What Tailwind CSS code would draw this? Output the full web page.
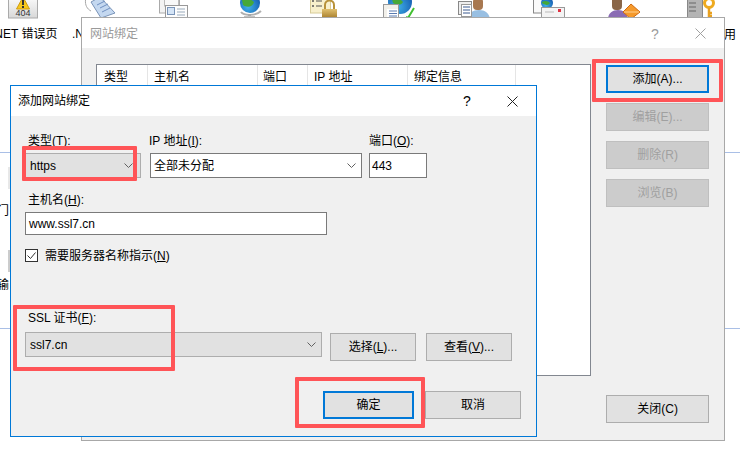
<!doctype html>
<html><head><meta charset="utf-8"><script src="https://cdn.jsdelivr.net/npm/@tailwindcss/browser@4"></script></head>
<body class="bg-white">
<div class="relative w-[740px] h-[454px] overflow-hidden bg-white text-[12px] leading-[16px] text-black font-['Liberation_Sans','Noto_Sans_CJK_SC',sans-serif]">

<!-- desktop background -->
<svg class="absolute left-0 top-0" width="740" height="20" viewBox="0 0 740 20">
  <defs>
    <radialGradient id="g" cx="0.4" cy="0.7" r="0.8"><stop offset="0" stop-color="#3fb0e8"/><stop offset="1" stop-color="#0f4fa8"/></radialGradient>
    <linearGradient id="l" x1="0" y1="0" x2="0" y2="1"><stop offset="0" stop-color="#e0c070"/><stop offset="1" stop-color="#a87f2c"/></linearGradient>
    <linearGradient id="t" x1="0" y1="0" x2="0" y2="1"><stop offset="0" stop-color="#fbfbfb"/><stop offset="1" stop-color="#d8d8d8"/></linearGradient>
  </defs>
  <rect x="8.500" y="-3" width="29" height="21" fill="url(#t)" stroke="#aaa"/>
  <path d="M23 -3 L29.500 9 L16.500 9 Z" fill="#f7c81c" stroke="#d09c10"/><rect x="22" y="0" width="2" height="5" fill="#333"/><rect x="22" y="6" width="2" height="2" fill="#333"/>
  <path d="M85.500 0C85 5 87 9 91 11" fill="none" stroke="#a8a8a8"/>
  <path d="M91 2 L100 -3 L115 13 L101 18 Z" fill="#c4d8f0" stroke="#7a94b8"/><path d="M97 5l8-4M100 8l8-4M102 12l8-4" stroke="#6f8fc0"/>
  <rect x="159.500" y="-2" width="20" height="15" fill="#f3f3f3" stroke="#aaa"/><rect x="164.500" y="-2" width="14" height="8" fill="#f8f8f8" stroke="#bbb"/><rect x="165.500" y="5.500" width="22" height="13" fill="#fdfdfd" stroke="#999"/><rect x="167.500" y="7.500" width="7" height="7" fill="#d4e4f6" stroke="#7a94b8"/><path d="M177 9h8M177 12h8M177 15h8" stroke="#9ab"/>
  <path d="M241 12c3 4 15 4 20 -1" fill="none" stroke="#b0b0b0" stroke-width="2"/>
  <circle cx="250" cy="3" r="10" fill="url(#g)"/><path d="M242 0c4-3 9-1 12 2-1 5-7 6-11 3z" fill="#46a838"/><rect x="248" y="14" width="3" height="2" fill="#aaa"/><rect x="244" y="16" width="11" height="1" fill="#c4c4c4"/>
  <rect x="310.500" y="-3" width="20" height="16" fill="#f8f0cc" stroke="#d8cc98"/><path d="M316 1h6M316 6h6" stroke="#555"/><circle cx="313" cy="1" r="1" fill="#555"/><circle cx="313" cy="6" r="1" fill="#555"/>
  <rect x="322" y="9" width="15" height="9" fill="url(#l)"/><path d="M325 9V5a4.500 4.500 0 0 1 9 0v4" fill="none" stroke="#b8923a" stroke-width="2"/>
  <circle cx="400" cy="2" r="12" fill="url(#g)"/><path d="M392 -1c4-2 9 0 11 3-2 4-7 3-10 1z" fill="#46a838"/><rect x="383.500" y="4.500" width="15" height="14" fill="#f2f0ea" stroke="#999"/><rect x="387" y="9" width="11" height="9" fill="#fff"/><path d="M389 11h8M389 13.500h8M389 16h8" stroke="#5a7ab0"/><path d="M406 17l2 1 6-10" fill="none" stroke="#40c030" stroke-width="2"/>
  <path d="M468 19c0-6 5-9 11-9s10 3 11 9z" fill="#98bfe2"/><rect x="473" y="-2" width="10" height="12" rx="4" fill="#a87850"/><rect x="458.500" y="1.500" width="13" height="13" fill="#eee" stroke="#888"/><rect x="461.500" y="4.500" width="10" height="12" fill="#fff" stroke="#999"/><path d="M463 7h7M463 10h7M463 13h7" stroke="#3a5a90"/>
  <rect x="533.500" y="-3" width="14" height="16" fill="#fafafa" stroke="#888"/><circle cx="547" cy="3" r="6" fill="url(#g)"/><path d="M542 2c3-2 6-1 8 1-2 3-5 2-8 0z" fill="#46a838"/><rect x="541.500" y="7.500" width="23" height="11" fill="#f4f4f4" stroke="#999"/><rect x="558" y="9" width="3" height="3" fill="#e03040"/><path d="M545 12h9" stroke="#bbb"/>
  <path d="M608 19c0-6 5-9 10-9s9 3 10 9z" fill="#8a6cb4"/><rect x="612" y="-3" width="10" height="13" rx="4" fill="#8a6648"/><path d="M631 4l9 8-9 7-8-7z" fill="#f59a2c" stroke="#d06a10"/><path d="M624 12h15" stroke="#ffd090"/>
  <rect x="687.500" y="-3" width="15" height="22" fill="#b4b4b4" stroke="#888"/><path d="M689 3h7M689 7h7M689 11h7" stroke="#666"/><circle cx="709" cy="3" r="4.500" fill="none" stroke="#eeaa20" stroke-width="3"/><path d="M709 8v10M709 13h3M709 16h3" stroke="#e8a020" stroke-width="2.500"/>
  <rect x="0" y="0" width="0" height="0"/>
</svg>
<span class="absolute left-[23px] top-[9px] -translate-x-1/2 text-[9px] leading-[9px] text-[#333]">404</span>
<div class="absolute left-[-9px] top-[26px] whitespace-nowrap">.NET 错误页</div>
<div class="absolute left-[72px] top-[26px] whitespace-nowrap">.NET</div>
<div class="absolute left-[724px] top-[27px]">用</div>
<div class="absolute left-[-3px] top-[203px]">门</div>
<div class="absolute left-[-3px] top-[277px]">输</div>
<div class="absolute left-0 top-[152px] w-full h-px bg-[#a9bfe6]"></div>
<div class="absolute left-0 top-[328px] w-full h-px bg-[#a9bfe6]"></div>
<div class="absolute left-[8px] top-[167px] w-[3px] h-[22px] bg-[#e8e8e8]"></div>
<div class="absolute left-[8px] top-[250px] w-[3px] h-[22px] bg-[#ccc]"></div>

<!-- outer dialog -->
<div class="absolute left-[81px] top-[17px] w-[644px] h-[424px] border border-[#a8a8a8] bg-[#f0f0f0] flex flex-col">
  <div class="h-[30px] shrink-0 bg-white flex items-center pl-[8px] pt-px text-[#9a9a9a]">
    <span class="flex-1">网站绑定</span>
    <span class="w-[16px] text-center text-[14px] mr-[32px]">?</span>
    <svg class="mr-[18px]" width="11" height="11" viewBox="0 0 11 11"><path d="M0.500 0.500L10.500 10.500M10.500 0.500L0.500 10.500" stroke="#a0a0a0"/></svg>
  </div>
  <div class="flex flex-1 pt-[16px] pl-[14px] pr-[15px] pb-[17px]">
    <div class="w-[496px] h-[312px] border border-[#828790] bg-white">
      <div class="flex h-[21px]">
        <span class="w-[51px] pl-[7px] border-r border-[#e5e5e5] h-full leading-[25px]">类型</span>
        <span class="w-[110px] pl-[6px] border-r border-[#e5e5e5] h-full leading-[25px]">主机名</span>
        <span class="w-[50px] pl-[5px] border-r border-[#e5e5e5] h-full leading-[25px]">端口</span>
        <span class="w-[100px] pl-[6px] border-r border-[#e5e5e5] h-full leading-[25px]">IP 地址</span>
        <span class="w-[108px] pl-[6px] border-r border-[#e5e5e5] h-full leading-[25px]">绑定信息</span>
      </div>
    </div>
    <div class="ml-[15px] w-[103px] flex flex-col pt-px">
      <button class="h-[28px] border-2 border-[#0078d7] bg-[#e1e1e1]">添加(A)...</button>
      <button class="h-[28px] mt-[10px] border border-[#bfbfbf] bg-[#cccccc] text-[#a0a0a0]">编辑(E)...</button>
      <button class="h-[28px] mt-[10px] border border-[#bfbfbf] bg-[#cccccc] text-[#a0a0a0]">删除(R)</button>
      <button class="h-[28px] mt-[10px] border border-[#bfbfbf] bg-[#cccccc] text-[#a0a0a0]">浏览(B)</button>
      <button class="h-[28px] mt-auto border border-[#adadad] bg-[#e1e1e1]">关闭(C)</button>
    </div>
  </div>
</div>

<!-- inner dialog -->
<div class="absolute left-[10px] top-[85px] w-[527px] h-[352px] border border-[#0078d7] bg-[#f0f0f0] flex flex-col">
  <div class="h-[30px] shrink-0 bg-white flex items-center pl-[7px]">
    <span class="flex-1">添加网站绑定</span>
    <span class="w-[16px] text-center text-[14px] mr-[32px]">?</span>
    <svg class="mr-[18px]" width="11" height="11" viewBox="0 0 11 11"><path d="M0.500 0.500L10.500 10.500M10.500 0.500L0.500 10.500" stroke="#222"/></svg>
  </div>
  <div class="pl-[14px] pt-[16px] flex flex-col flex-1">
    <div class="flex h-[46px]">
      <div class="w-[125px]">
        <div class="pl-[3px] pt-px h-[21px]">类型(<u>T</u>):</div>
        <div class="w-[116px] h-[25px] border border-[#adadad] bg-[#e1e1e1] flex items-center justify-between pl-[4px] pr-[7px]"><span>https</span>
          <svg width="9" height="5" viewBox="0 0 9 5"><path d="M0.500 0.500L4.500 4.500L8.500 0.500" fill="none" stroke="#606060"/></svg></div>
      </div>
      <div class="w-[219px]">
        <div class="-ml-px pt-px h-[21px]">IP 地址(<u>I</u>):</div>
        <div class="w-[212px] h-[25px] border border-[#7a7a7a] bg-white flex items-center justify-between pl-[3px] pr-[5px]"><span>全部未分配</span>
          <svg width="9" height="5" viewBox="0 0 9 5"><path d="M0.500 0.500L4.500 4.500L8.500 0.500" fill="none" stroke="#606060"/></svg></div>
      </div>
      <div>
        <div class="pt-px h-[21px]">端口(<u>O</u>):</div>
        <div class="w-[58px] h-[25px] border border-[#7a7a7a] bg-white flex items-center pl-[2px]">443</div>
      </div>
    </div>
    <div class="pl-[3px] mt-[14px] h-[20px]">主机名(<u>H</u>):</div>
    <div class="w-[302px] h-[23px] border border-[#7a7a7a] bg-white flex items-center pl-[3px]">www.ssl7.cn</div>
    <div class="flex items-center mt-[14px] h-[13px]">
      <div class="w-[13px] h-[13px] border border-[#333] bg-white flex items-center justify-center">
        <svg width="11" height="11" viewBox="0 0 11 11"><path d="M1.500 5.500L4.500 8.500L9.500 2.500" fill="none" stroke="#333"/></svg>
      </div>
      <span class="ml-[7px]">需要服务器名称指示(<u>N</u>)</span>
    </div>
    <div class="pl-[3px] mt-[48px] h-[22px]">SSL 证书(<u>F</u>):</div>
    <div class="flex items-start">
      <div class="w-[297px] h-[25px] border border-[#adadad] bg-[#e1e1e1] flex items-center justify-between pl-[4px] pr-[5px]"><span>ssl7.cn</span>
        <svg width="9" height="5" viewBox="0 0 9 5"><path d="M0.500 0.500L4.500 4.500L8.500 0.500" fill="none" stroke="#606060"/></svg></div>
      <button class="ml-[8px] mt-px w-[86px] h-[28px] border border-[#adadad] bg-[#e1e1e1]">选择(<u>L</u>)...</button>
      <button class="ml-[10px] mt-px w-[86px] h-[28px] border border-[#adadad] bg-[#e1e1e1]">查看(<u>V</u>)...</button>
    </div>
    <div class="flex mt-[30px] ml-[298px]">
      <button class="w-[91px] h-[28px] border-2 border-[#0078d7] bg-[#e1e1e1]">确定</button>
      <button class="ml-[11px] w-[96px] h-[28px] border border-[#adadad] bg-[#e1e1e1]">取消</button>
    </div>
  </div>
</div>

<!-- red annotations -->
<div class="absolute left-[592px] top-[59px] w-[131px] h-[43px] border-[4px] border-[#ff5457] rounded-[1px]"></div>
<div class="absolute left-[22px] top-[146px] w-[115px] h-[35px] border-[4px] border-[#ff5457] rounded-[1px]"></div>
<div class="absolute left-[13px] top-[305px] w-[162px] h-[66px] border-[4px] border-[#ff5457] rounded-[1px]"></div>
<div class="absolute left-[295px] top-[377px] w-[130px] h-[51px] border-[4px] border-[#ff5457] rounded-[1px]"></div>
</div>
</body></html>
